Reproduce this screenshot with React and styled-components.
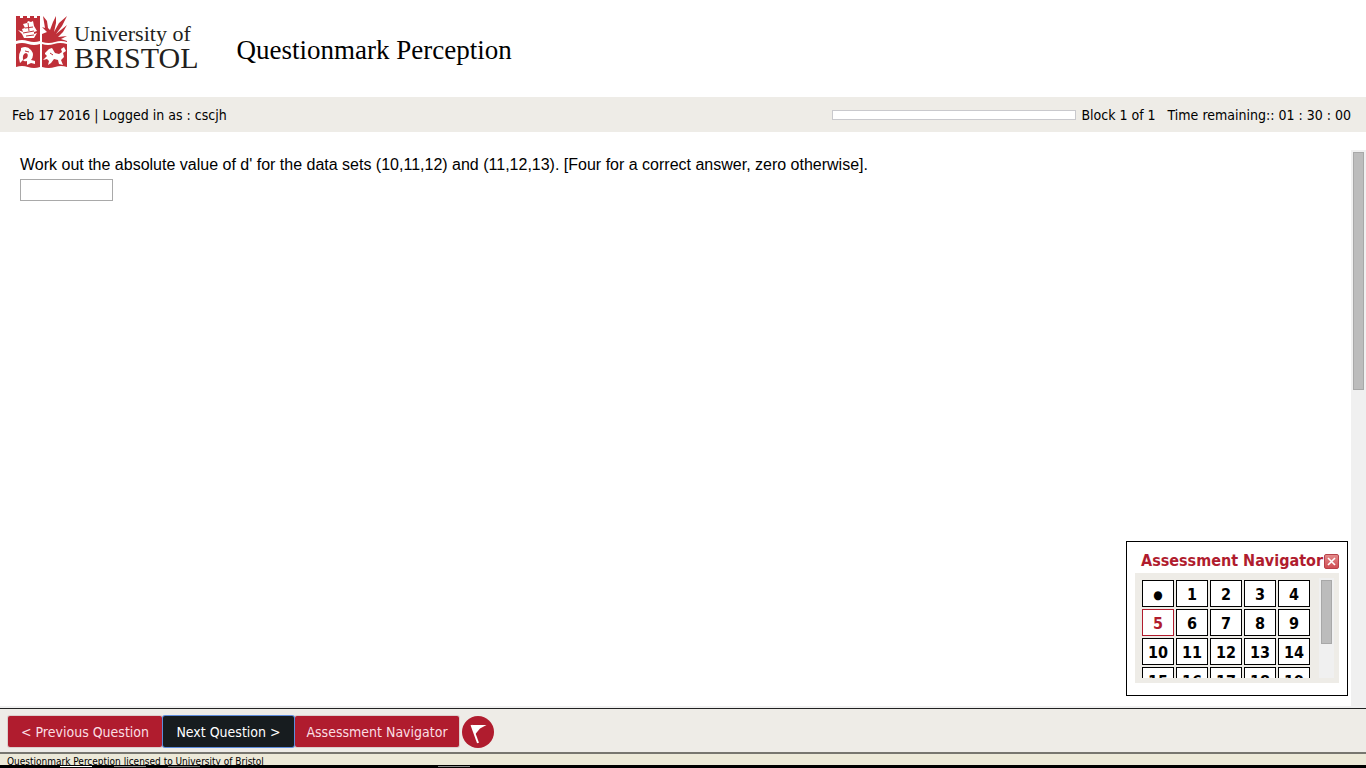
import React from "react";
import styled, { createGlobalStyle } from "styled-components";

const tahoma = `Tahoma, "DejaVu Sans Condensed", "Noto Sans", sans-serif`;

const GlobalStyle = createGlobalStyle`
  * { box-sizing: border-box; }
  body { margin: 0; background: #fff; color: #000; font-family: ${tahoma}; font-size: 14px; }
`;

const Page = styled.div`
  display: flex;
  flex-direction: column;
  min-height: 100vh;
  position: relative;
`;

const Header = styled.header`
  display: flex;
  align-items: flex-start;
  gap: 38px;
  height: 97px;
  padding: 16px 15px 0;
`;

const Brand = styled.div`
  display: flex;
  gap: 6px;
`;

const Crest = styled.svg`
  width: 53px;
  height: 53px;
  flex: none;
`;

const Wordmark = styled.div`
  font-family: "Liberation Serif", serif;
  color: #231f20;
  white-space: nowrap;
`;

const WordTop = styled.div`
  font-size: 22px;
  line-height: 24px;
  padding-top: 6px;
`;

const WordBottom = styled.div`
  font-size: 30px;
  line-height: 24px;
`;

const Title = styled.h1`
  margin: 0;
  padding-top: 20px;
  font: 400 27px/28px Georgia, "Liberation Serif", serif;
`;

const StatusBar = styled.div`
  display: flex;
  justify-content: space-between;
  align-items: center;
  height: 35px;
  padding: 0 15px 0 12px;
  background: #eeece7;
  line-height: 20px;
`;

const StatusGroup = styled.div`
  display: flex;
  align-items: center;
  gap: 12px;
`;

const BlockStatus = styled.div`
  display: flex;
  align-items: center;
  gap: 5px;
`;

const Progress = styled.div`
  width: 244px;
  height: 10px;
  background: #fff;
  border: 1px solid #c9c9cd;
`;

const Body = styled.main`
  display: flex;
  flex: 1;
  padding-top: 18px;
  border-bottom: 2px solid #f0f0f0;
`;

const Question = styled.label`
  flex: 1;
  display: block;
  padding: 4px 20px;
  font: 16px/21px "Liberation Sans", Arial, sans-serif;
`;

const Answer = styled.input`
  display: block;
  width: 93px;
  height: 22px;
  margin-top: 4px;
  border: 1px solid #a9a9a9;
  background: #fff;
  font: inherit;
`;

const Track = styled.div`
  flex: none;
  width: 15px;
  padding: 2px;
  background: #f0f0f0;
`;

const Thumb = styled.div`
  width: 11px;
  height: ${(p) => p.$height}px;
  background: #bcbcbc;
  border: 1px solid #a8a8a8;
`;

const Toolbar = styled.nav`
  display: flex;
  align-items: center;
  height: 46px;
  padding: 2px 8px 0;
  background: #eeece7;
  border-top: 1px solid #222;
  border-bottom: 2px solid #77766f;
`;

const ToolButton = styled.button`
  height: 31px;
  width: ${(p) => p.$width}px;
  margin-left: 1px;
  padding: 0;
  border: 0;
  border-radius: 2px;
  box-shadow: 0 0 0 1px ${(p) => (p.$active ? "#5f8ddc" : "#dccfcd")};
  position: relative;
  z-index: ${(p) => (p.$active ? 1 : 0)};
  background: ${(p) => (p.$active ? "#171c1f" : "#b01c2e")};
  color: ${(p) => (p.$active ? "#fff" : "#fbdfe3")};
  font: 14px/20px ${tahoma};
  white-space: nowrap;
  &:first-child { margin-left: 0; }
`;

const FlagButton = styled.button`
  width: 32px;
  height: 32px;
  margin: 0 0 0 3px;
  padding: 0;
  border: 0;
  border-radius: 50%;
  background: #b01c2e;
  svg { display: block; }
`;

const Footer = styled.footer`
  height: 11px;
  padding-left: 7px;
  background: #ece9d8;
  overflow: hidden;
  font-size: 10px;
  line-height: 16px;
`;

const Strip = styled.div`
  display: flex;
  gap: 22px;
  height: 3px;
  padding: 1px 0 0 60px;
  background: #000;
`;

const Mark = styled.span`
  width: 32px;
  height: 1px;
  background: ${(p) => p.$color};
  &:last-child { margin-left: 216px; }
`;

const Navigator = styled.aside`
  position: absolute;
  right: 18px;
  bottom: 72px;
  width: 222px;
  height: 155px;
  padding: 8px;
  border: 1px solid #000;
  background: #fff;
`;

const NavHead = styled.div`
  display: flex;
  align-items: center;
  justify-content: space-between;
  height: 23px;
  padding-left: 6px;
`;

const NavTitle = styled.h2`
  margin: 0;
  padding-bottom: 2px;
  color: #b01c2e;
  font: 700 16px/20px ${tahoma};
  white-space: nowrap;
`;

const Close = styled.button`
  flex: none;
  width: 15px;
  height: 15px;
  padding: 0;
  border: 1px solid #b8424a;
  border-radius: 2px;
  background: linear-gradient(#e38a8a, #cf4d53);
  svg { display: block; }
`;

const NavPanel = styled.div`
  display: flex;
  justify-content: space-between;
  height: 110px;
  padding: 5px;
  background: #eeece7;
`;

const Grid = styled.div`
  display: grid;
  grid-template-columns: repeat(5, 32px);
  grid-auto-rows: 27px;
  gap: 2px;
  padding: 2px;
  overflow: hidden;
`;

const Cell = styled.button`
  padding: 2px 0 0;
  border: 1px solid currentColor;
  background: #fff;
  color: ${(p) => (p.$current ? "#b01c2e" : "#000")};
  font: 700 ${(p) => (p.$small ? 12 : 16)}px/20px ${tahoma};
`;

const cells = ["●", ...Array.from({ length: 19 }, (_, i) => String(i + 1))];

function UniversityCrest() {
  return (
    <Crest viewBox="0 0 53 53" aria-hidden="true">
      <g fill="#bf2f38">
        <path d="M1 0h4v2h3V0h4v2h3V0h4v2h3V0h3v25q-6 2-12 0T1 25Z" />
        <path d="M28 0l4 5 1 7 2 2L38 6l3-6v7l-2 9L44 7l8-7-5 10-6 8 11-9-4 7-5 5 9-1-6 3 6 2v1q-6-2-12 0t-13 0V18l5-2-5-5 3 1Z" />
        <path d="M1 28q6-2 12 0t12 0v23q-6 2-12 0t-12 0Z" />
        <path d="M27 28q6 2 12 0t13 0v23q-6-2-12 0t-13 0Z" />
      </g>
      <g fill="#fff">
        <path d="M3 14l5 2-1-3 3-1-2-4 4-1 1-2 3 1 2-1 1 5 3 5-3 1v2l3-1-3 5H9l-2-4Z" />
        <path d="M6 32q6-3 10 2 4 5 0 10l4 1v3l-4-1-4 2v-4q-3 1-4-1l4-2q2-4-1-5-4 1-3 7l-3 3-1-5q0-5 2-8Z" />
        <path d="M30 37l4-4 3-1 3 5 4 1 3-2-1-3 3-2 2 4-3 2 1 4-3 3 2 5-4-1-1-4-4-1-3 4-3 2 1-4-2-2-4 1 4-4-2-2Z" />
      </g>
      <g fill="none" stroke="#bf2f38">
        <path d="M8 17l11-2M10 12l8-1M13 7l1 8M11 20l8-1" />
        <path d="M10 35l4 1M35 37l3 2" />
      </g>
    </Crest>
  );
}

export default function App() {
  return (
    <>
      <GlobalStyle />
      <Page>
        <Header>
          <Brand>
            <UniversityCrest />
            <Wordmark>
              <WordTop>University of</WordTop>
              <WordBottom>BRISTOL</WordBottom>
            </Wordmark>
          </Brand>
          <Title>Questionmark Perception</Title>
        </Header>
        <StatusBar>
          <span>Feb 17 2016 | Logged in as : cscjh</span>
          <StatusGroup>
            <BlockStatus>
              <Progress role="progressbar" aria-label="Progress" aria-valuenow={0} />
              <span>Block 1 of 1</span>
            </BlockStatus>
            <span>Time remaining:: 01 : 30 : 00</span>
          </StatusGroup>
        </StatusBar>
        <Body>
          <Question>
            Work out the absolute value of d' for the data sets (10,11,12) and (11,12,13). [Four for a correct answer, zero otherwise].
            <Answer type="text" />
          </Question>
          <Track><Thumb $height={238} /></Track>
        </Body>
        <Toolbar>
          <ToolButton $width={154}>&lt; Previous Question</ToolButton>
          <ToolButton $width={131} $active>Next Question &gt;</ToolButton>
          <ToolButton $width={164}>Assessment Navigator</ToolButton>
          <FlagButton aria-label="Flag question">
            <svg width="32" height="32" viewBox="0 0 32 32">
              <path d="M9.500 9l6.500 18" stroke="#fff" strokeWidth="2" />
              <path d="M10 9h14.500l-6.500 3.500-5 6Z" fill="#fff" />
            </svg>
          </FlagButton>
        </Toolbar>
        <Footer>Questionmark Perception licensed to University of Bristol</Footer>
        <Strip>
          <Mark $color="#fff" />
          <Mark $color="#8a8a8a" />
          <Mark $color="#6c6c6c" />
          <Mark $color="#8a8a8a" />
        </Strip>
        <Navigator>
          <NavHead>
            <NavTitle>Assessment Navigator</NavTitle>
            <Close aria-label="Close">
              <svg width="13" height="13" viewBox="0 0 13 13">
                <path d="M3 3l7 7M10 3l-7 7" stroke="#fff" strokeWidth="1.6" />
              </svg>
            </Close>
          </NavHead>
          <NavPanel>
            <Grid>
              {cells.map((c) => (
                <Cell key={c} $current={c === "5"} $small={c === "●"}>{c}</Cell>
              ))}
            </Grid>
            <Track><Thumb $height={64} /></Track>
          </NavPanel>
        </Navigator>
      </Page>
    </>
  );
}
